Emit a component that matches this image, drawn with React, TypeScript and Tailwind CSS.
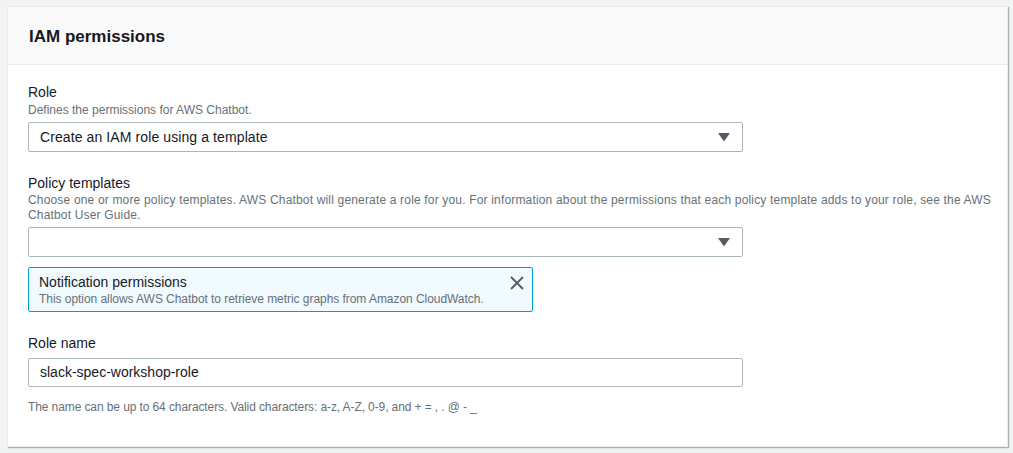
import React from "react";

const Caret = () => (
  <svg width="12" height="10" viewBox="0 0 12 10" className="shrink-0">
    <path d="M1 1.5 L11 1.5 L6 8.5 Z" fill="#545b64" stroke="#545b64" strokeWidth="1.2" strokeLinejoin="round" />
  </svg>
);

export default function App() {
  return (
    <div
      className="w-[1013px] h-[453px] bg-[#f2f3f3] pt-[6px] pl-[7px] pr-[5px] text-[#16191f]"
      style={{ fontFamily: '"Liberation Sans", Arial, sans-serif' }}
    >
      <div className="w-[1001px] h-[441px] bg-white border border-[#eaeded] shadow-[1px_1px_1px_0_rgba(0,28,36,0.3)]">
        <div className="h-[58px] bg-[#fafafa] border-b border-[#eaeded] pl-[21px] flex items-center">
          <h2 className="text-[17px] font-bold leading-[22px] pt-[2px]">IAM permissions</h2>
        </div>
        <div className="pl-[20px] pr-[14px] pt-[17px]">
          <div className="text-[14px] leading-[20px]">Role</div>
          <div className="text-[12px] leading-[16px] text-[#687078]">Defines the permissions for AWS Chatbot.</div>
          <div className="mt-[4px] w-[715px] h-[30px] border border-[#aab7b8] rounded-[2px] flex items-center justify-between pl-[11px] pr-[12px]">
            <span className="text-[14px] tracking-[0.1px]">Create an IAM role using a template</span>
            <Caret />
          </div>

          <div className="mt-[21px] text-[14px] leading-[20px]">Policy templates</div>
          <div className="text-[12px] leading-[15px] text-[#687078] tracking-[0.17px]">
            Choose one or more policy templates. AWS Chatbot will generate a role for you. For information about the permissions that each policy template adds to your role, see the AWS Chatbot User Guide.
          </div>
          <div className="mt-[4px] w-[715px] h-[30px] border border-[#aab7b8] rounded-[2px] flex items-center justify-end pr-[12px]">
            <Caret />
          </div>

          <div className="mt-[10px] w-[505px] h-[45px] bg-[#f1faff] border border-[#00a1c9] rounded-[2px] flex items-start justify-between pl-[10px] pr-[7px] pt-[5px]">
            <div>
              <div className="text-[14px] leading-[18px]">Notification permissions</div>
              <div className="text-[12px] leading-[16px] text-[#687078] tracking-[-0.05px]">This option allows AWS Chatbot to retrieve metric graphs from Amazon CloudWatch.</div>
            </div>
            <svg width="16" height="16" viewBox="0 0 16 16" className="mt-[2px]">
              <path d="M2 2 L14 14 M14 2 L2 14" stroke="#545b64" strokeWidth="1.8" fill="none" />
            </svg>
          </div>

          <div className="mt-[21px] text-[14px] leading-[20px]">Role name</div>
          <div className="mt-[5px] w-[715px] h-[29px] border border-[#aab7b8] rounded-[2px] flex items-center pl-[11px]">
            <span className="text-[14px]">slack-spec-workshop-role</span>
          </div>
          <div className="mt-[12px] text-[12px] leading-[16px] text-[#687078] tracking-[-0.1px]">
            The name can be up to 64 characters. Valid characters: a-z, A-Z, 0-9, and + = , . @ - _
          </div>
        </div>
      </div>
    </div>
  );
}
